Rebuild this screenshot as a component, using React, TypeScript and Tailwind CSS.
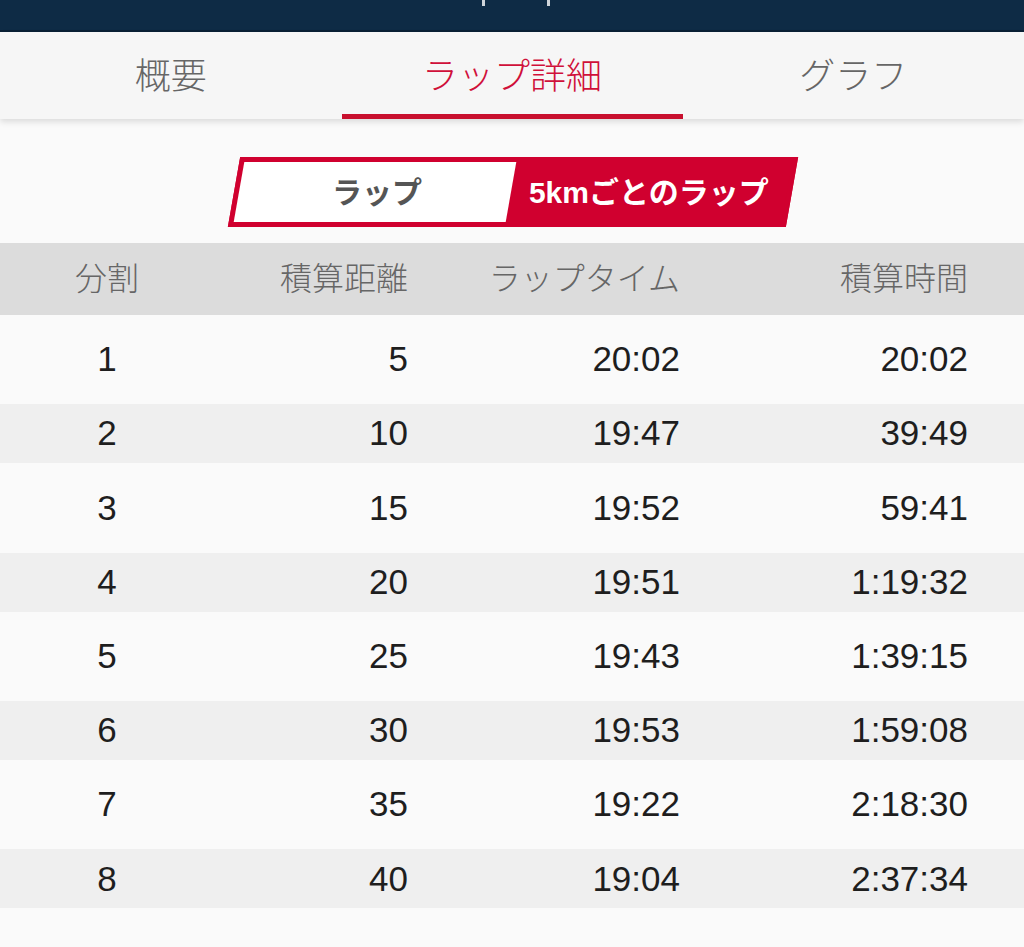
import React from "react";

const rows = [
  ["1", "5", "20:02", "20:02"],
  ["2", "10", "19:47", "39:49"],
  ["3", "15", "19:52", "59:41"],
  ["4", "20", "19:51", "1:19:32"],
  ["5", "25", "19:43", "1:39:15"],
  ["6", "30", "19:53", "1:59:08"],
  ["7", "35", "19:22", "2:18:30"],
  ["8", "40", "19:04", "2:37:34"],
];

const font = { fontFamily: '"Liberation Sans", "Noto Sans CJK JP", sans-serif' };

export default function App() {
  return (
    <div className="w-[1024px] h-[947px] bg-[#fafafa] overflow-hidden" style={font}>
      {/* top dark bar */}
      <div className="h-[32px] bg-[#0e2b45] border-b-2 border-[#0a2035] relative">
        <div className="absolute left-[482px] top-0 w-[3px] h-[6px] bg-white/80" />
        <div className="absolute left-[547px] top-0 w-[3px] h-[6px] bg-white/80" />
      </div>

      {/* tabs */}
      <div className="h-[87px] bg-[#f6f6f6] grid grid-cols-3 shadow-[0_3px_6px_rgba(0,0,0,0.12)] relative z-10">
        <div className="flex items-center justify-center text-[36px] font-light text-[#666] pt-[2px]">概要</div>
        <div className="relative flex items-center justify-center text-[36px] font-light text-[#d0103a] pt-[2px]">
          ラップ詳細
          <div className="absolute left-[1px] right-0 bottom-0 h-[5px] bg-[#c8102e]" />
        </div>
        <div className="flex items-center justify-center text-[36px] font-light text-[#666] pt-[2px]">グラフ</div>
      </div>

      {/* segmented control */}
      <div className="pt-[38px] pb-[16px] flex justify-center">
        <div className="ml-[2px] w-[558px] h-[70px] -skew-x-[10deg] bg-[#d0002f] border-[5px] border-[#d0002f] flex">
          <div className="w-[272px] bg-white flex items-center justify-center">
            <span className="skew-x-[10deg] text-[30px] font-bold text-[#555] pl-[4px]">ラップ</span>
          </div>
          <div className="flex-1 flex items-center justify-center">
            <span className="skew-x-[10deg] text-[30px] font-bold text-white">5kmごとのラップ</span>
          </div>
        </div>
      </div>

      {/* table header */}
      <div className="h-[72px] bg-[#dcdcdc] grid grid-cols-[214px_194px_272px_288px] items-center text-[32px] font-light text-[#666]">
        <div className="text-center">分割</div>
        <div className="text-right">積算距離</div>
        <div className="text-right">ラップタイム</div>
        <div className="text-right">積算時間</div>
      </div>

      {/* rows */}
      <div className="pt-[15px] flex flex-col gap-[15.2px]">
        {rows.map((r, i) => (
          <div
            key={i}
            className={`h-[59px] grid grid-cols-[214px_194px_272px_288px] items-center text-[35px] text-[#1e1e1e] ${
              i % 2 === 1 ? "bg-[#efefef]" : "bg-[#fafafa]"
            }`}
          >
            <div className="text-center">{r[0]}</div>
            <div className="text-right">{r[1]}</div>
            <div className="text-right">{r[2]}</div>
            <div className="text-right">{r[3]}</div>
          </div>
        ))}
      </div>
    </div>
  );
}
